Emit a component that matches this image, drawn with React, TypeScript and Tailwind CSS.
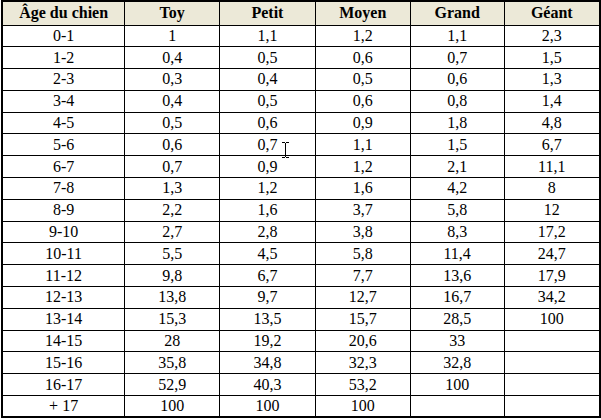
const headers = ["Âge du chien", "Toy", "Petit", "Moyen", "Grand", "Géant"];

const rows: string[][] = [
  ["0-1", "1", "1,1", "1,2", "1,1", "2,3"],
  ["1-2", "0,4", "0,5", "0,6", "0,7", "1,5"],
  ["2-3", "0,3", "0,4", "0,5", "0,6", "1,3"],
  ["3-4", "0,4", "0,5", "0,6", "0,8", "1,4"],
  ["4-5", "0,5", "0,6", "0,9", "1,8", "4,8"],
  ["5-6", "0,6", "0,7", "1,1", "1,5", "6,7"],
  ["6-7", "0,7", "0,9", "1,2", "2,1", "11,1"],
  ["7-8", "1,3", "1,2", "1,6", "4,2", "8"],
  ["8-9", "2,2", "1,6", "3,7", "5,8", "12"],
  ["9-10", "2,7", "2,8", "3,8", "8,3", "17,2"],
  ["10-11", "5,5", "4,5", "5,8", "11,4", "24,7"],
  ["11-12", "9,8", "6,7", "7,7", "13,6", "17,9"],
  ["12-13", "13,8", "9,7", "12,7", "16,7", "34,2"],
  ["13-14", "15,3", "13,5", "15,7", "28,5", "100"],
  ["14-15", "28", "19,2", "20,6", "33", ""],
  ["15-16", "35,8", "34,8", "32,3", "32,8", ""],
  ["16-17", "52,9", "40,3", "53,2", "100", ""],
  ["+ 17", "100", "100", "100", "", ""],
];

const widths = ["w-[123px]", "w-[95px]", "w-[96px]", "w-[95px]", "w-[94px]", "w-[96px]"];

// text cursor sitting over the "0,7" cell, as in the screenshot
function Cursor() {
  return (
    <svg
      className="absolute left-[281px] top-[142px]"
      width="9"
      height="16"
      viewBox="0 0 9 16"
      fill="none"
      stroke="#000"
      strokeWidth="1"
    >
      <path d="M1 0.5h3M5 0.5h3M4.5 1v14M1 15.5h3M5 15.5h3" />
    </svg>
  );
}

export default function App() {
  return (
    <div className="relative w-[601px] h-[420px] bg-white pl-[1px] font-['Liberation_Serif',serif] text-black">
      <table className="table-fixed border-collapse border-2 border-black">
        <colgroup>
          {widths.map((w, i) => (
            <col key={i} className={w} />
          ))}
        </colgroup>
        <thead>
          <tr className="h-[24px] bg-[#ece9d8]">
            {headers.map((h) => (
              <th key={h} className="border border-black p-0 text-center text-[16px] font-bold leading-none">
                {h}
              </th>
            ))}
          </tr>
        </thead>
        <tbody>
          {rows.map((r, i) => (
            <tr key={i} className="h-[21.8px]">
              {r.map((c, j) => (
                <td key={j} className="border border-black p-0 text-center text-[16px] leading-none">
                  {c}
                </td>
              ))}
            </tr>
          ))}
        </tbody>
      </table>
      <Cursor />
    </div>
  );
}
